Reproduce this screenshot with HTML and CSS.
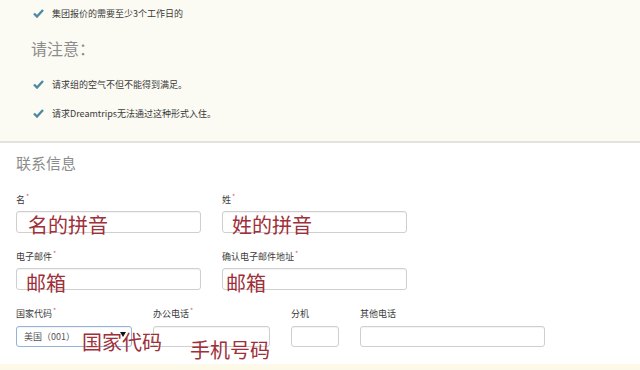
FILE: index.html
```html
<!DOCTYPE html>
<html lang="zh-CN">
<head>
    <meta charset="UTF-8">
    <meta name="viewport" content="width=device-width, initial-scale=1.0">
    <title>联系信息</title>
    <link rel="stylesheet" href="styles.css">
</head>
<body>
    <div class="notice">
        <div class="check-item">
            <svg class="check" width="11" height="9" viewBox="0 0 11 9"><polyline points="1,4.5 4,7.5 10,1" fill="none" stroke="#4d8aa2" stroke-width="2.4"/></svg>
            <span>集团报价的需要至少3个工作日的</span>
        </div>
        <h3 class="notice-title">请注意：</h3>
        <div class="check-item item-2">
            <svg class="check" width="11" height="9" viewBox="0 0 11 9"><polyline points="1,4.5 4,7.5 10,1" fill="none" stroke="#4d8aa2" stroke-width="2.4"/></svg>
            <span>请求组的空气不但不能得到满足。</span>
        </div>
        <div class="check-item item-3">
            <svg class="check" width="11" height="9" viewBox="0 0 11 9"><polyline points="1,4.5 4,7.5 10,1" fill="none" stroke="#4d8aa2" stroke-width="2.4"/></svg>
            <span>请求Dreamtrips无法通过这种形式入住。</span>
        </div>
    </div>

    <div class="contact">
        <h3 class="section-title">联系信息</h3>

        <div class="form-row">
            <div class="field w-wide">
                <label>名<sup>*</sup></label>
                <div class="box">
                    <div class="input"></div>
                    <span class="note note-first">名的拼音</span>
                </div>
            </div>
            <div class="field w-wide">
                <label>姓<sup>*</sup></label>
                <div class="box">
                    <div class="input"></div>
                    <span class="note note-last">姓的拼音</span>
                </div>
            </div>
        </div>

        <div class="form-row">
            <div class="field w-wide">
                <label>电子邮件<sup>*</sup></label>
                <div class="box">
                    <div class="input"></div>
                    <span class="note note-mail">邮箱</span>
                </div>
            </div>
            <div class="field w-wide">
                <label>确认电子邮件地址<sup>*</sup></label>
                <div class="box">
                    <div class="input"></div>
                    <span class="note note-mail2">邮箱</span>
                </div>
            </div>
        </div>

        <div class="form-row last-row">
            <div class="field w-country">
                <label>国家代码<sup>*</sup></label>
                <div class="box">
                    <div class="input select">美国（001）<span class="caret"></span></div>
                    <span class="note note-country">国家代码</span>
                </div>
            </div>
            <div class="field w-phone">
                <label>办公电话<sup>*</sup></label>
                <div class="box">
                    <div class="input"></div>
                    <span class="note note-phone">手机号码</span>
                </div>
            </div>
            <div class="field w-ext">
                <label>分机</label>
                <div class="box">
                    <div class="input"></div>
                </div>
            </div>
            <div class="field w-wide">
                <label>其他电话</label>
                <div class="box">
                    <div class="input"></div>
                </div>
            </div>
        </div>
    </div>

    <div class="footer-band"></div>
</body>
</html>
```

FILE: styles.css
```css
body { margin: 0; background: #fff; font-family: "Noto Sans CJK SC", "Noto Sans", sans-serif; color: #444; }

.notice {
    background: #fbfaf3;
    height: 143px;
    box-sizing: border-box;
    padding: 4px 0 0 33px;
    border-bottom: 2px solid #e3e2dd;
}
.check-item { display: flex; align-items: center; gap: 8px; height: 18px; font-size: 9px; color: #3a3a3a; }
.check { flex: none; }
.notice-title { margin: 15px 0 0 -2px; font-size: 16px; line-height: 22px; font-weight: normal; color: #8c8c8c; }
.item-2 { margin-top: 16px; }
.item-3 { margin-top: 11px; }

.contact { padding: 0 0 0 16px; }
.section-title { margin: 10px 0 0; font-size: 15px; line-height: 20px; font-weight: normal; color: #8c8c8c; }

.form-row { display: flex; gap: 21px; margin-top: 18px; }
.section-title + .form-row { margin-top: 21px; }

.field label { display: block; height: 12px; font-size: 9px; line-height: 12px; color: #3a3a3a; margin-bottom: 5px; }
.field sup { color: #e06060; font-size: 7px; line-height: 0; vertical-align: 4px; margin-left: 1px; }

.box { position: relative; }
.input {
    height: 22px;
    box-sizing: border-box;
    border: 1px solid #cfcfcf;
    border-radius: 3px;
    background: #fff;
    box-shadow: inset 0 1px 1px rgba(0,0,0,0.05);
}
.w-wide { width: 185px; }
.w-country { width: 116px; }
.w-phone { width: 117px; }
.w-ext { width: 48px; }

.last-row .field label { margin-bottom: 6px; }
.last-row .input { height: 21px; }

.select {
    position: relative;
    border-color: #94b3da;
    font-size: 9px;
    line-height: 19px;
    padding-left: 7px;
    color: #555;
}
.caret {
    position: absolute;
    right: 5px;
    top: 5px;
    border-left: 3px solid transparent;
    border-right: 3px solid transparent;
    border-top: 5px solid #111;
}

.note {
    position: absolute;
    z-index: 2;
    font-size: 20px;
    line-height: 20px;
    color: #9e3039;
    white-space: nowrap;
}
.note-first { left: 12px; top: 4px; }
.note-last { left: 10px; top: 4px; }
.note-mail { left: 10px; top: 5px; }
.note-mail2 { left: 4px; top: 5px; }
.note-country { left: 66px; top: 6px; }
.note-phone { left: 37px; top: 14px; }

.footer-band { margin-top: 17px; height: 8px; background: #fcf9e9; }
```
